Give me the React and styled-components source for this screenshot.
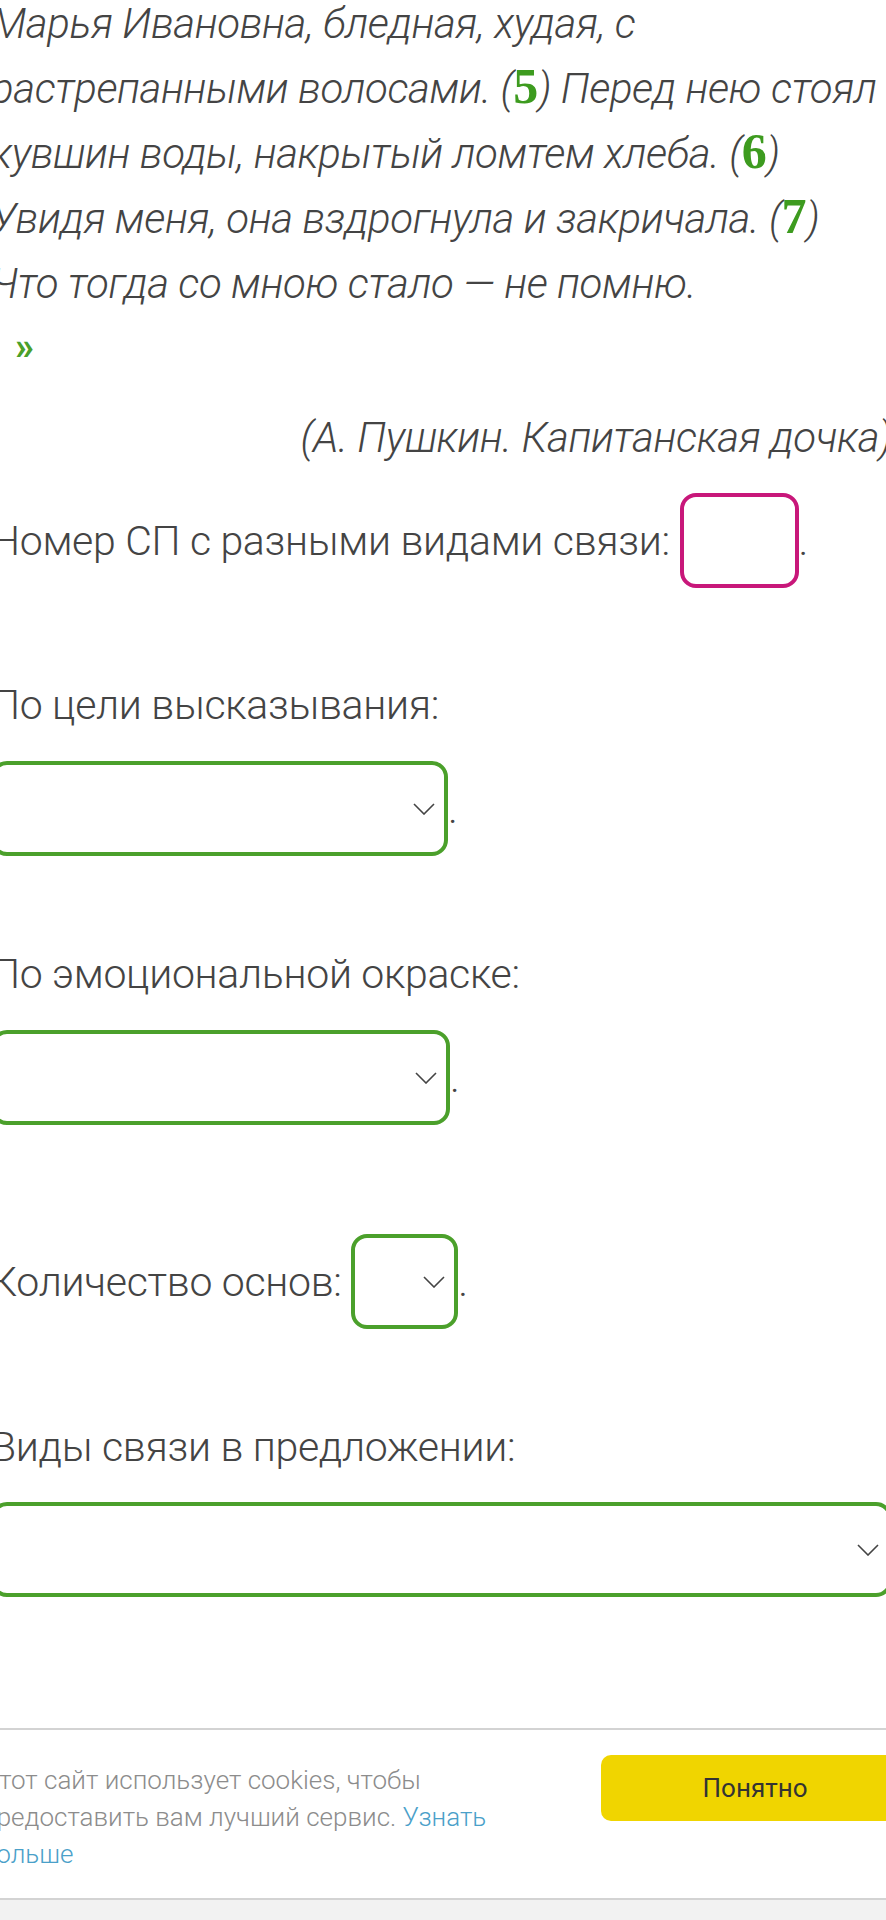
import React from "react";
import styled, { createGlobalStyle } from "styled-components";

const GlobalStyle = createGlobalStyle`
  html, body {
    margin: 0;
    padding: 0;
    background: #fff;
  }
  body {
    font-family: Roboto, "Noto Sans", sans-serif;
    color: #444;
  }
`;

const Page = styled.div`
  width: 886px;
  min-height: 1920px;
  overflow: hidden;
  display: flex;
  flex-direction: column;
`;

const Content = styled.div`
  width: 901px;
  margin: -9px 0 0 -9px;
  font-size: 41px;
  line-height: 65px;
  letter-spacing: -0.3px;
  font-weight: 300;
  color: #444;
`;

const Quote = styled.p`
  margin: 0;
  font-size: 42px;
  letter-spacing: -0.4px;
  font-style: italic;
`;

const Num = styled.span`
  font-family: "Liberation Serif", "DejaVu Serif", serif;
  font-style: normal;
  font-weight: 700;
  font-size: 50px;
  line-height: 1;
  letter-spacing: 0;
  color: #3d9b1f;
`;

const CloseMark = styled.p`
  margin: 10px 0 0 24px;
  font-size: 38px;
  line-height: 40px;
  font-weight: 700;
  color: #4aa02a;
`;

const Source = styled.p`
  margin: 39px 0 0;
  text-align: right;
  font-size: 42px;
  letter-spacing: -0.4px;
  font-style: italic;
`;

const Label = styled.p`
  margin: ${(p) => p.$top}px 0 0;
`;

const BoxLine = styled.div`
  margin-top: ${(p) => p.$top}px;
`;

const Field = styled.span`
  position: relative;
  display: inline-block;
  box-sizing: border-box;
  width: ${(p) => p.$width}px;
  height: 95px;
  border: 4px solid ${(p) => (p.$pink ? "#c8177a" : "#4ba02b")};
  border-radius: 16px;
  background: #fff;
  overflow: hidden;
  vertical-align: -33px;
`;

const Chevron = styled.svg`
  position: absolute;
  right: 9px;
  top: 50%;
  margin-top: -6px;
  width: 22px;
  height: 12px;
`;

const Banner = styled.div`
  margin: 131px 0 0 -18px;
  width: 927px;
  box-sizing: border-box;
  padding: 25px 0;
  border-top: 2px solid #d3d3d3;
  border-bottom: 2px solid #d3d3d3;
  background: #fff;
  display: flex;
  align-items: flex-start;
`;

const BannerText = styled.p`
  margin: 7px 0 0;
  width: 545px;
  font-size: 26px;
  line-height: 37px;
  font-weight: 300;
  color: #8c8c8c;
`;

const MoreLink = styled.a`
  color: #4aa0c9;
  text-decoration: none;
`;

const AcceptButton = styled.button`
  margin-left: auto;
  width: 308px;
  height: 66px;
  border: none;
  border-radius: 10px;
  background: #f0d500;
  font-family: Roboto, "Noto Sans", sans-serif;
  font-size: 26px;
  font-weight: 400;
  color: #333;
`;

const Footer = styled.div`
  flex: 1;
  background: #f2f2f2;
`;

const Arrow = () => (
  <Chevron viewBox="0 0 22 12" fill="none">
    <polyline points="1,1 11,11 21,1" stroke="#444" strokeWidth="1.6" />
  </Chevron>
);

const Select = ({ width }) => (
  <Field $width={width}>
    <Arrow />
  </Field>
);

export default function App() {
  return (
    <Page>
      <GlobalStyle />
      <Content>
        <Quote>
          Марья Ивановна, бледная, худая, с растрепанными волосами. (<Num>5</Num>) Перед нею стоял
          кувшин воды, накрытый ломтем хлеба. (<Num>6</Num>) Увидя меня, она вздрогнула и закричала.
          (<Num>7</Num>) Что тогда со мною стало — не помню.
        </Quote>
        <CloseMark>»</CloseMark>
        <Source>(А. Пушкин. Капитанская дочка)</Source>

        <BoxLine $top={23}>
          Номер СП с разными видами связи: <Field $width={119} $pink />.
        </BoxLine>

        <Label $top={85}>По цели высказывания:</Label>
        <BoxLine $top={23}>
          <Select width={457} />.
        </BoxLine>

        <Label $top={86}>По эмоциональной окраске:</Label>
        <BoxLine $top={23}>
          <Select width={459} />.
        </BoxLine>

        <BoxLine $top={109}>
          Количество основ: <Select width={107} />.
        </BoxLine>

        <Label $top={86}>Виды связи в предложении:</Label>
        <BoxLine $top={22}>
          <Select width={901} />
        </BoxLine>
      </Content>

      <Banner>
        <BannerText>
          Этот сайт использует cookies, чтобы предоставить вам лучший сервис.{" "}
          <MoreLink href="#">Узнать больше</MoreLink>
        </BannerText>
        <AcceptButton>Понятно</AcceptButton>
      </Banner>
      <Footer />
    </Page>
  );
}
